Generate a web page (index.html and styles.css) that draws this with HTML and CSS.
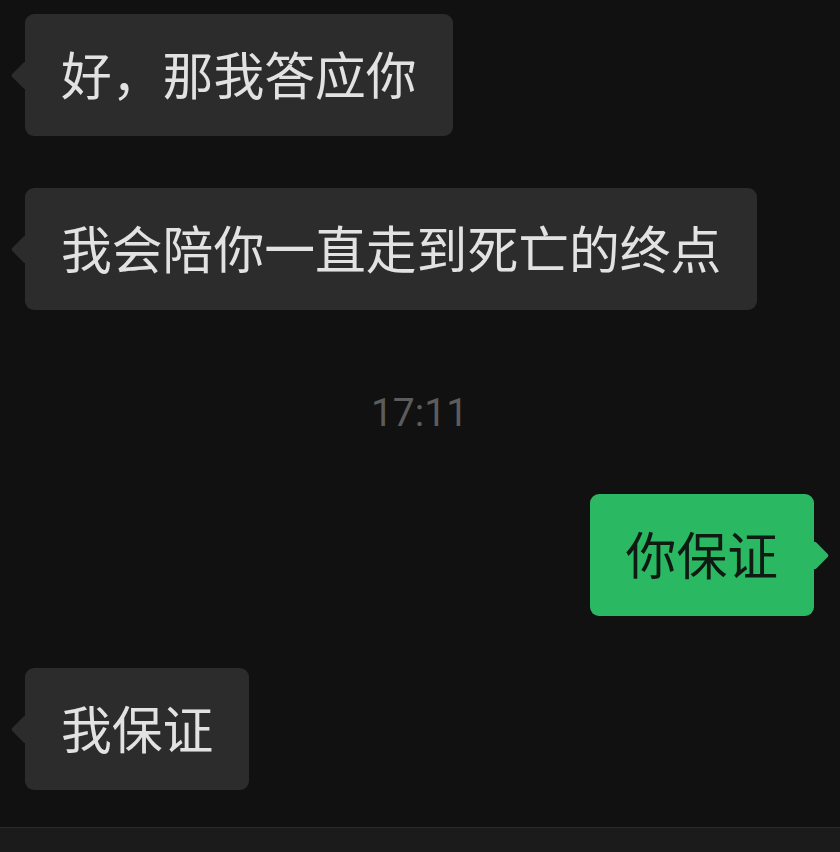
FILE: index.html
```html
<!DOCTYPE html>
<html lang="zh-CN">

<head>
    <meta charset="UTF-8">
    <meta name="viewport" content="width=device-width, initial-scale=1.0">
    <title>聊天</title>
    <link rel="stylesheet" href="styles.css">
</head>

<body>
    <div class="chat">
        <div class="row left">
            <div class="bubble">好，那我答应你</div>
        </div>
        <div class="row left">
            <div class="bubble">我会陪你一直走到死亡的终点</div>
        </div>

        <div class="time">17:11</div>

        <div class="row right">
            <div class="bubble mine">你保证</div>
        </div>
        <div class="row left">
            <div class="bubble">我保证</div>
        </div>
    </div>
    <div class="footer"></div>
</body>

</html>
```

FILE: styles.css
```css
* {
    box-sizing: border-box;
}

html,
body {
    height: 100%;
}

body {
    margin: 0;
    background-color: #111111;
    font-family: "Noto Sans CJK SC", "Noto Sans", sans-serif;
    display: flex;
    flex-direction: column;
    overflow: hidden;
}

.chat {
    flex: 1;
    display: flex;
    flex-direction: column;
    gap: 52px;
    padding: 14px 26px 0 25px;
}

.row {
    display: flex;
}

.row.right {
    justify-content: flex-end;
}

.bubble {
    position: relative;
    height: 122px;
    padding: 0 36px 4px;
    display: flex;
    align-items: center;
    font-size: 50.8px;
    line-height: 50px;
    color: #e2e2e2;
    background-color: #2c2c2c;
    border-radius: 9px;
    white-space: nowrap;
}

.bubble::before {
    content: "";
    position: absolute;
    top: 50%;
    left: 0;
    width: 21px;
    height: 21px;
    margin: -10.5px 0 0 -10.5px;
    background-color: inherit;
    border-radius: 3px;
    transform: rotate(45deg);
}

.bubble.mine {
    background-color: #2bb863;
    color: #0f1a12;
}

.bubble.mine::before {
    left: auto;
    right: 0;
    margin: -10.5px -10.5px 0 0;
}

.time {
    margin: 26px 0 4px;
    text-align: center;
    font-family: Roboto, "Noto Sans", sans-serif;
    font-size: 39px;
    line-height: 50px;
    color: #5c5c5c;
}

.footer {
    height: 25px;
    background-color: #1b1b1b;
    border-top: 1px solid #2a2a2a;
}
```
